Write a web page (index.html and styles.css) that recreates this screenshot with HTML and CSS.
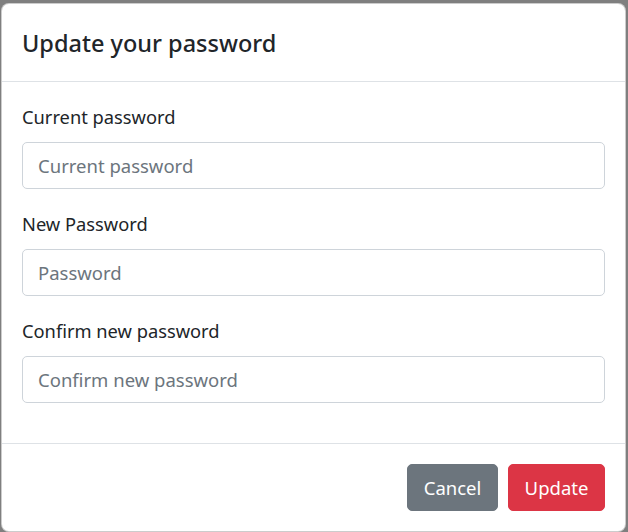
FILE: index.html
```html
<!DOCTYPE html>
<html>
<head>
<meta charset="utf-8">
<link rel="stylesheet" href="styles.css">
</head>
<body>
<div class="backdrop">
  <div class="modal">
    <div class="modal-header">
      <h5 class="modal-title">Update your password</h5>
    </div>
    <div class="modal-body">
      <div class="form-group">
        <label class="label">Current password</label>
        <input class="input" type="password" placeholder="Current password">
      </div>
      <div class="form-group">
        <label class="label">New Password</label>
        <input class="input" type="password" placeholder="Password">
      </div>
      <div class="form-group">
        <label class="label">Confirm new password</label>
        <input class="input" type="password" placeholder="Confirm new password">
      </div>
    </div>
    <div class="modal-footer">
      <button class="btn btn-secondary">Cancel</button>
      <button class="btn btn-danger">Update</button>
    </div>
  </div>
</div>
</body>
</html>
```
FILE: styles.css
```css
* { box-sizing: border-box; }
html, body {
  margin: 0;
  padding: 0;
  width: 628px;
  height: 532px;
  overflow: hidden;
}
body {
  background: #7f7f7f;
  font-family: "Noto Sans", "Open Sans", "Liberation Sans", sans-serif;
  font-size: 20px;
  line-height: 1.5;
  color: #212529;
}
.backdrop {
  padding: 3px 1px 0 1px;
}
.modal {
  width: 625px;
  background: #fff;
  border: 1px solid rgba(0,0,0,.2);
  border-radius: 8px;
  display: flex;
  flex-direction: column;
}
.modal-header {
  padding: 21px 20px 18px;
  border-bottom: 1px solid #dee2e6;
}
.modal-title {
  margin: 0;
  font-size: 23.5px;
  font-weight: 500;
  line-height: 37.5px;
}
.modal-body {
  padding: 20px 20px 20px;
}
.form-group {
  margin-bottom: 20px;
  display: flex;
  flex-direction: column;
}
.label {
  font-size: 18.3px;
  line-height: 30px;
  margin-bottom: 10px;
}
.input {
  height: 47px;
  padding: 7px 15px;
  font-family: inherit;
  font-size: 18.5px;
  color: #495057;
  border: 1px solid #ced4da;
  border-radius: 5px;
  background: #fff;
  outline: none;
}
.input::placeholder { color: #6c757d; }
.modal-footer {
  border-top: 1px solid #dee2e6;
  padding: 15px;
  display: flex;
  justify-content: flex-end;
}
.btn {
  margin: 5px;
  height: 47px;
  padding: 0 15px;
  font-family: inherit;
  font-size: 18.5px;
  border: 1px solid transparent;
  border-radius: 5px;
  color: #fff;
}
.btn-secondary { background: #6c757d; border-color: #6c757d; width: 91px; }
.btn-danger { background: #dc3545; border-color: #dc3545; width: 97px; }
```
